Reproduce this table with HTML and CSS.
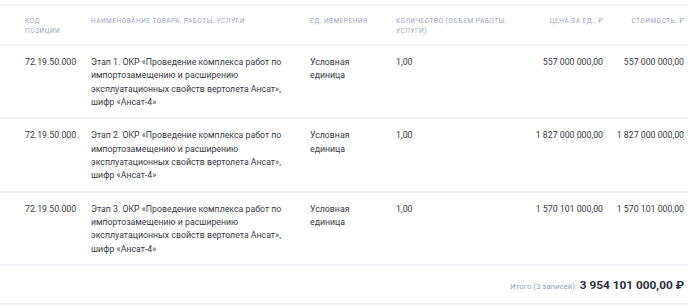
FILE: index.html
```html
<!DOCTYPE html>
<html lang="ru">
<head>
<meta charset="utf-8">
<link rel="stylesheet" href="styles.css">
</head>
<body>
<div class="wrap">
<table class="items">
  <colgroup>
    <col class="c-code"><col class="c-name"><col class="c-unit"><col class="c-qty"><col class="c-price"><col class="c-cost">
  </colgroup>
  <thead>
    <tr>
      <th class="code"><span class="narrow">Код позиции</span></th>
      <th>Наименование товара, работы, услуги</th>
      <th>Ед. измерения</th>
      <th class="qty">Количество (объем работы, услуги)</th>
      <th class="num price">Цена за ед., ₽</th>
      <th class="num cost">Стоимость, ₽</th>
    </tr>
  </thead>
  <tbody>
    <tr>
      <td class="code">72.19.50.000</td>
      <td class="name">Этап 1. ОКР «Проведение комплекса работ по импортозамещению и расширению эксплуатационных свойств вертолета Ансат», шифр «Ансат-4»</td>
      <td class="unit">Условная единица</td>
      <td>1,00</td>
      <td class="num price">557 000 000,00</td>
      <td class="num cost">557 000 000,00</td>
    </tr>
    <tr>
      <td class="code">72.19.50.000</td>
      <td class="name">Этап 2. ОКР «Проведение комплекса работ по импортозамещению и расширению эксплуатационных свойств вертолета Ансат», шифр «Ансат-4»</td>
      <td class="unit">Условная единица</td>
      <td>1,00</td>
      <td class="num price">1 827 000 000,00</td>
      <td class="num cost">1 827 000 000,00</td>
    </tr>
    <tr>
      <td class="code">72.19.50.000</td>
      <td class="name">Этап 3. ОКР «Проведение комплекса работ по импортозамещению и расширению эксплуатационных свойств вертолета Ансат», шифр «Ансат-4»</td>
      <td class="unit">Условная единица</td>
      <td>1,00</td>
      <td class="num price">1 570 101 000,00</td>
      <td class="num cost">1 570 101 000,00</td>
    </tr>
  </tbody>
</table>
<div class="total">
  <span class="total-label">Итого (3 записей):</span>
  <span class="total-value">3 954 101 000,00 ₽</span>
</div>
</div>
</body>
</html>
```
FILE: styles.css
```css
html, body {
  margin: 0;
  padding: 0;
  background: #ffffff;
}
body {
  font-family: Roboto, "Liberation Sans", Arial, sans-serif;
  color: #383b42;
}
.wrap {
  width: 688px;
  padding-top: 4px;
}
.items {
  width: 688px;
  border-collapse: collapse;
  table-layout: fixed;
  border-top: 2px solid #f1f2f7;
}
.c-code { width: 85px; }
.c-name { width: 219px; }
.c-unit { width: 86px; }
.c-qty { width: 121px; }
.c-price { width: 98px; }
.c-cost { width: 79px; }

.items th {
  font-size: 6.6px;
  line-height: 10px;
  font-weight: 400;
  letter-spacing: 0.45px;
  text-transform: uppercase;
  color: #a3a9ba;
  text-align: left;
  vertical-align: top;
  padding: 10px 6px 8px 6px;
  border-bottom: 2px solid #eff1f6;
}
.items th.qty {
  padding-right: 0;
}
.narrow {
  display: block;
  max-width: 44px;
}
.items td {
  font-size: 8.75px;
  line-height: 13.33px;
  vertical-align: top;
  text-align: left;
  padding: 10px 6px 8px 6px;
  border-bottom: 2px solid #eff1f6;
}
.items td.name {
  padding-right: 21px;
}
.items td.unit {
  padding-right: 12px;
}
.items .code {
  padding-left: 25px;
  padding-right: 4px;
}
.items .num {
  text-align: right;
  white-space: nowrap;
}
.items .cost {
  padding-right: 4px;
}
.total {
  display: flex;
  justify-content: flex-end;
  align-items: baseline;
  gap: 3px;
  padding: 12px 4px 11px 0;
  border-bottom: 2px solid #f1f2f7;
}
.total-label {
  font-size: 7.8px;
  color: #9ba3b6;
}
.total-value {
  font-size: 11.8px;
  font-weight: 700;
  color: #2c303b;
}
```
